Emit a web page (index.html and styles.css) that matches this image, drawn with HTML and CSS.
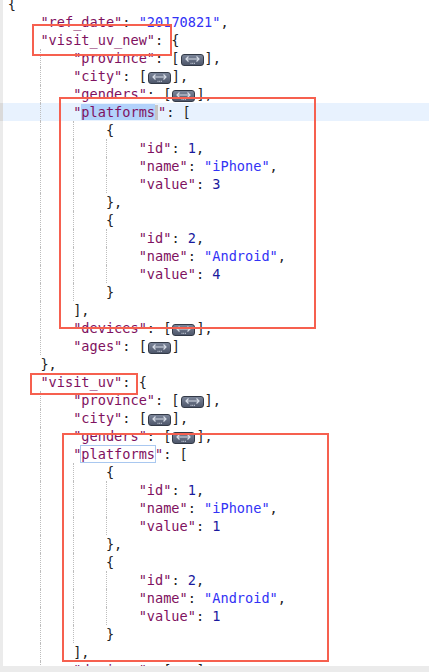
FILE: index.html
```html
<!DOCTYPE html>
<html>
<head>
<meta charset="utf-8">
<link rel="stylesheet" href="styles.css">
</head>
<body>
<div class="editor">
  <div class="code">
    <div class="ln"><span class="gut"></span><span class="txt">{</span></div>
    <div class="ln"><span class="gut"></span><span class="txt"><i class="ind"></i><span class="k">"ref_date"</span>: <span class="s">"20170821"</span>,</span></div>
    <div class="ln"><span class="gut"></span><span class="txt"><i class="ind"></i><span class="k">"visit_uv_new"</span>: {</span></div>
    <div class="ln"><span class="gut"></span><span class="txt"><i class="ind"></i><i class="ind"></i><span class="k">"province"</span>: [<b class="fold"><svg viewBox="0 0 21 10" width="21" height="10"><path d="M4 4H17M6.5 1.5L4 4L6.5 6.5M14.5 1.5L17 4L14.5 6.5" fill="none" stroke="#d6dce6" stroke-width="1.2"/><path d="M8.5 8.3h1M10.2 8.3h1M11.9 8.3h1" stroke="#d6dce6" stroke-width="1"/></svg></b>],</span></div>
    <div class="ln"><span class="gut"></span><span class="txt"><i class="ind"></i><i class="ind"></i><span class="k">"city"</span>: [<b class="fold"><svg viewBox="0 0 21 10" width="21" height="10"><path d="M4 4H17M6.5 1.5L4 4L6.5 6.5M14.5 1.5L17 4L14.5 6.5" fill="none" stroke="#d6dce6" stroke-width="1.2"/><path d="M8.5 8.3h1M10.2 8.3h1M11.9 8.3h1" stroke="#d6dce6" stroke-width="1"/></svg></b>],</span></div>
    <div class="ln"><span class="gut"></span><span class="txt"><i class="ind"></i><i class="ind"></i><span class="k">"genders"</span>: [<b class="fold"><svg viewBox="0 0 21 10" width="21" height="10"><path d="M4 4H17M6.5 1.5L4 4L6.5 6.5M14.5 1.5L17 4L14.5 6.5" fill="none" stroke="#d6dce6" stroke-width="1.2"/><path d="M8.5 8.3h1M10.2 8.3h1M11.9 8.3h1" stroke="#d6dce6" stroke-width="1"/></svg></b>],</span></div>
    <div class="ln active"><span class="gut"></span><span class="txt"><i class="ind"></i><i class="ind"></i><span class="k">"<span class="sel">platforms</span><span class="caret"></span>"</span>: [</span></div>
    <div class="ln"><span class="gut"></span><span class="txt"><i class="ind"></i><i class="ind"></i><i class="ind"></i>{</span></div>
    <div class="ln"><span class="gut"></span><span class="txt"><i class="ind"></i><i class="ind"></i><i class="ind"></i><i class="ind"></i><span class="k">"id"</span>: <span class="n">1</span>,</span></div>
    <div class="ln"><span class="gut"></span><span class="txt"><i class="ind"></i><i class="ind"></i><i class="ind"></i><i class="ind"></i><span class="k">"name"</span>: <span class="s">"iPhone"</span>,</span></div>
    <div class="ln"><span class="gut"></span><span class="txt"><i class="ind"></i><i class="ind"></i><i class="ind"></i><i class="ind"></i><span class="k">"value"</span>: <span class="n">3</span></span></div>
    <div class="ln"><span class="gut"></span><span class="txt"><i class="ind"></i><i class="ind"></i><i class="ind"></i>},</span></div>
    <div class="ln"><span class="gut"></span><span class="txt"><i class="ind"></i><i class="ind"></i><i class="ind"></i>{</span></div>
    <div class="ln"><span class="gut"></span><span class="txt"><i class="ind"></i><i class="ind"></i><i class="ind"></i><i class="ind"></i><span class="k">"id"</span>: <span class="n">2</span>,</span></div>
    <div class="ln"><span class="gut"></span><span class="txt"><i class="ind"></i><i class="ind"></i><i class="ind"></i><i class="ind"></i><span class="k">"name"</span>: <span class="s">"Android"</span>,</span></div>
    <div class="ln"><span class="gut"></span><span class="txt"><i class="ind"></i><i class="ind"></i><i class="ind"></i><i class="ind"></i><span class="k">"value"</span>: <span class="n">4</span></span></div>
    <div class="ln"><span class="gut"></span><span class="txt"><i class="ind"></i><i class="ind"></i><i class="ind"></i>}</span></div>
    <div class="ln"><span class="gut"></span><span class="txt"><i class="ind"></i><i class="ind"></i>],</span></div>
    <div class="ln"><span class="gut"></span><span class="txt"><i class="ind"></i><i class="ind"></i><span class="k">"devices"</span>: [<b class="fold"><svg viewBox="0 0 21 10" width="21" height="10"><path d="M4 4H17M6.5 1.5L4 4L6.5 6.5M14.5 1.5L17 4L14.5 6.5" fill="none" stroke="#d6dce6" stroke-width="1.2"/><path d="M8.5 8.3h1M10.2 8.3h1M11.9 8.3h1" stroke="#d6dce6" stroke-width="1"/></svg></b>],</span></div>
    <div class="ln"><span class="gut"></span><span class="txt"><i class="ind"></i><i class="ind"></i><span class="k">"ages"</span>: [<b class="fold"><svg viewBox="0 0 21 10" width="21" height="10"><path d="M4 4H17M6.5 1.5L4 4L6.5 6.5M14.5 1.5L17 4L14.5 6.5" fill="none" stroke="#d6dce6" stroke-width="1.2"/><path d="M8.5 8.3h1M10.2 8.3h1M11.9 8.3h1" stroke="#d6dce6" stroke-width="1"/></svg></b>]</span></div>
    <div class="ln"><span class="gut"></span><span class="txt"><i class="ind"></i>},</span></div>
    <div class="ln"><span class="gut"></span><span class="txt"><i class="ind"></i><span class="k">"visit_uv"</span>: {</span></div>
    <div class="ln"><span class="gut"></span><span class="txt"><i class="ind"></i><i class="ind"></i><span class="k">"province"</span>: [<b class="fold"><svg viewBox="0 0 21 10" width="21" height="10"><path d="M4 4H17M6.5 1.5L4 4L6.5 6.5M14.5 1.5L17 4L14.5 6.5" fill="none" stroke="#d6dce6" stroke-width="1.2"/><path d="M8.5 8.3h1M10.2 8.3h1M11.9 8.3h1" stroke="#d6dce6" stroke-width="1"/></svg></b>],</span></div>
    <div class="ln"><span class="gut"></span><span class="txt"><i class="ind"></i><i class="ind"></i><span class="k">"city"</span>: [<b class="fold"><svg viewBox="0 0 21 10" width="21" height="10"><path d="M4 4H17M6.5 1.5L4 4L6.5 6.5M14.5 1.5L17 4L14.5 6.5" fill="none" stroke="#d6dce6" stroke-width="1.2"/><path d="M8.5 8.3h1M10.2 8.3h1M11.9 8.3h1" stroke="#d6dce6" stroke-width="1"/></svg></b>],</span></div>
    <div class="ln"><span class="gut"></span><span class="txt"><i class="ind"></i><i class="ind"></i><span class="k">"genders"</span>: [<b class="fold"><svg viewBox="0 0 21 10" width="21" height="10"><path d="M4 4H17M6.5 1.5L4 4L6.5 6.5M14.5 1.5L17 4L14.5 6.5" fill="none" stroke="#d6dce6" stroke-width="1.2"/><path d="M8.5 8.3h1M10.2 8.3h1M11.9 8.3h1" stroke="#d6dce6" stroke-width="1"/></svg></b>],</span></div>
    <div class="ln"><span class="gut"></span><span class="txt"><i class="ind"></i><i class="ind"></i><span class="k">"<span class="match">platforms</span>"</span>: [</span></div>
    <div class="ln"><span class="gut"></span><span class="txt"><i class="ind"></i><i class="ind"></i><i class="ind"></i>{</span></div>
    <div class="ln"><span class="gut"></span><span class="txt"><i class="ind"></i><i class="ind"></i><i class="ind"></i><i class="ind"></i><span class="k">"id"</span>: <span class="n">1</span>,</span></div>
    <div class="ln"><span class="gut"></span><span class="txt"><i class="ind"></i><i class="ind"></i><i class="ind"></i><i class="ind"></i><span class="k">"name"</span>: <span class="s">"iPhone"</span>,</span></div>
    <div class="ln"><span class="gut"></span><span class="txt"><i class="ind"></i><i class="ind"></i><i class="ind"></i><i class="ind"></i><span class="k">"value"</span>: <span class="n">1</span></span></div>
    <div class="ln"><span class="gut"></span><span class="txt"><i class="ind"></i><i class="ind"></i><i class="ind"></i>},</span></div>
    <div class="ln"><span class="gut"></span><span class="txt"><i class="ind"></i><i class="ind"></i><i class="ind"></i>{</span></div>
    <div class="ln"><span class="gut"></span><span class="txt"><i class="ind"></i><i class="ind"></i><i class="ind"></i><i class="ind"></i><span class="k">"id"</span>: <span class="n">2</span>,</span></div>
    <div class="ln"><span class="gut"></span><span class="txt"><i class="ind"></i><i class="ind"></i><i class="ind"></i><i class="ind"></i><span class="k">"name"</span>: <span class="s">"Android"</span>,</span></div>
    <div class="ln"><span class="gut"></span><span class="txt"><i class="ind"></i><i class="ind"></i><i class="ind"></i><i class="ind"></i><span class="k">"value"</span>: <span class="n">1</span></span></div>
    <div class="ln"><span class="gut"></span><span class="txt"><i class="ind"></i><i class="ind"></i><i class="ind"></i>}</span></div>
    <div class="ln"><span class="gut"></span><span class="txt"><i class="ind"></i><i class="ind"></i>],</span></div>
    <div class="ln"><span class="gut"></span><span class="txt"><i class="ind"></i><i class="ind"></i><span class="k">"devices"</span>: [<b class="fold"><svg viewBox="0 0 21 10" width="21" height="10"><path d="M4 4H17M6.5 1.5L4 4L6.5 6.5M14.5 1.5L17 4L14.5 6.5" fill="none" stroke="#d6dce6" stroke-width="1.2"/><path d="M8.5 8.3h1M10.2 8.3h1M11.9 8.3h1" stroke="#d6dce6" stroke-width="1"/></svg></b>],</span></div>
  </div>
  <div class="hbar"></div>
  <div class="mark m1"></div>
  <div class="mark m2"></div>
  <div class="mark m3"></div>
  <div class="mark m4"></div>
</div>
</body>
</html>
```

FILE: styles.css
```css
html, body {
  margin: 0;
  padding: 0;
  background: #ffffff;
}

.editor {
  position: relative;
  width: 429px;
  height: 672px;
  overflow: hidden;
  display: flex;
  flex-direction: column;
}

.code {
  margin-top: -5px;
  height: 671px;
  overflow: hidden;
  flex: none;
}

.ln {
  display: flex;
  height: 18px;
}

.gut {
  flex: none;
  width: 3px;
  background: #ebebeb;
}

.ln.active {
  background: #e8f2fe;
}

.ln.active .gut {
  background: #dadada;
}

.txt {
  padding-left: 4.7px;
  white-space: pre;
  font-family: "DejaVu Sans Mono", monospace;
  font-size: 13.6px;
  line-height: 18px;
  color: #222222;
}

.ind {
  display: inline-block;
  width: 4ch;
  height: 18px;
  vertical-align: top;
  box-sizing: border-box;
}

.ind + .ind {
  border-left: 1px dotted #bdbdbd;
}

.k { color: #7f1160; }
.s { color: #3232f5; }
.n { color: #1a1a9e; }

.sel {
  background: #b2d2fb;
}

.caret {
  display: inline-block;
  width: 3px;
  height: 15px;
  background: #c6c6c6;
  vertical-align: -3px;
}

.match {
  box-shadow: 0 0 0 1px #a9c8f0;
}

.fold {
  display: inline-block;
  box-sizing: border-box;
  width: 23px;
  height: 12px;
  margin: 5px 1px 0;
  vertical-align: top;
  border: 1px solid #333a47;
  border-radius: 3px;
  background: linear-gradient(#7b8599, #4e576b);
  line-height: 0;
}

.fold svg {
  display: block;
}

.hbar {
  flex: 1;
  background: #ebebeb;
}

.mark {
  position: absolute;
  box-sizing: border-box;
  border: 2px solid #f6604f;
}

.m1 { left: 32px; top: 24px; width: 140px; height: 32px; }
.m2 { left: 59px; top: 97px; width: 257px; height: 232px; }
.m3 { left: 30px; top: 373px; width: 108px; height: 22px; }
.m4 { left: 62px; top: 433px; width: 267px; height: 229px; }
```
